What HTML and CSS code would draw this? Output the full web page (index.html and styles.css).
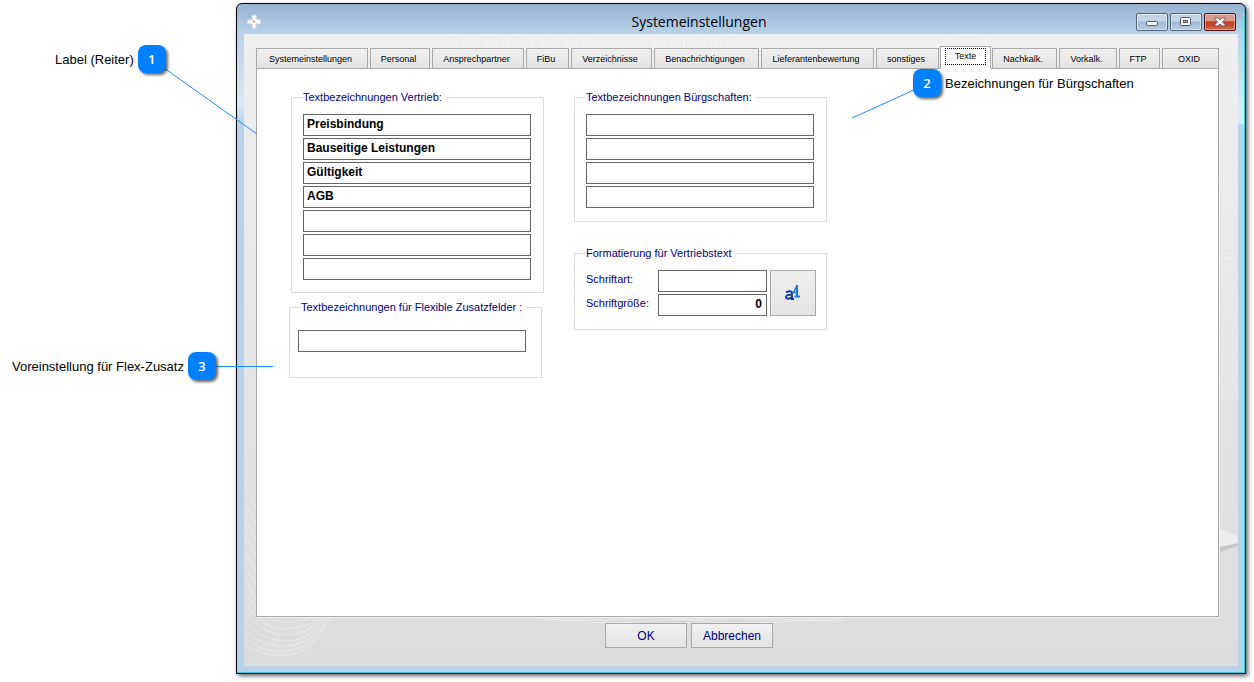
FILE: index.html
```html
<!DOCTYPE html>
<html lang="de">
<head>
<meta charset="utf-8">
<title>Systemeinstellungen</title>
<link rel="stylesheet" href="styles.css">
</head>
<body>
<main class="stage">
  <section class="window" aria-label="Systemeinstellungen">
    <header class="titlebar">
      <svg class="app-icon" width="16" height="16" viewBox="0 0 16 16" aria-hidden="true">
        <path d="M6 1.500L10 1L10 5L14.500 6L14 10L10 9.500L10 14.500L6 14L6.500 10L1.500 9.500L2 6L6.500 6Z" fill="#fff" stroke="#d5dde4" stroke-width="1"/>
        <circle cx="8" cy="7.500" r="1.200" fill="#ee9a6c"/>
      </svg>
      <h1 class="title">Systemeinstellungen</h1>
      <div class="controls">
        <button class="control" type="button" aria-label="Minimieren">
          <svg width="12" height="10" viewBox="0 0 12 10"><rect x=".5" y="4.500" width="11" height="4" rx="1" fill="#f4f4f4" stroke="#4f5966"/></svg>
        </button>
        <button class="control" type="button" aria-label="Maximieren">
          <svg width="12" height="10" viewBox="0 0 12 10"><rect x=".5" y=".5" width="10" height="8" rx="1" fill="#f4f4f4" stroke="#4f5966"/><rect x="3.500" y="3.500" width="4" height="2" fill="#9db5d0" stroke="#4f5966"/></svg>
        </button>
        <button class="control control-close" type="button" aria-label="Schließen">
          <svg width="12" height="10" viewBox="0 0 12 10"><path d="M1 1H4L6 3L8 1H11V2.500L8.500 5L11 7.500V9H8L6 7L4 9H1V7.500L3.500 5L1 2.500Z" fill="#fff" stroke="#5d3c42" stroke-width=".8"/></svg>
        </button>
      </div>
    </header>
    <div class="client">
      <svg class="swirl swirl-top" width="800" height="34" viewBox="0 0 800 34" aria-hidden="true">
        <path d="M210 0l9 34M220 0l9 34M230 0l9 34M240 0l9 34M250 0l9 34M262 0l8 34M274 0l7 34M286 0l6 34M298 0l4 34M310 0l3 34M322 0l1 34M334 0l-2 34M346 0l-4 34M400 0l5 34M410 0l4 34M420 0l3 34M430 0l2 34M440 0l1 34M450 0v34M462 0l-3 34M474 0l-6 34M486 0l-9 34M498 0l-14 34M700 0l14 34M710 0l12 34M720 0l10 34M730 0l8 34M740 0l8 34"/>
      </svg>
      <svg class="swirl swirl-bottom" width="600" height="200" viewBox="0 0 600 200" aria-hidden="true">
        <path d="M0 20L14 46M0 36L14 62M0 52L14 78M0 68L14 94M0 84L14 108M0 98L14 122M0 112L14 136M0 124Q20 160 50 156Q66 154 74 150M0 134Q20 168 50 162Q68 160 76 150M0 144Q22 174 52 168Q70 164 79 150M0 154Q24 180 52 174Q72 168 82 150M0 164Q24 186 50 179Q72 174 85 150M0 172Q24 191 48 184Q72 180 88 150M0 178Q28 196 56 186Q74 178 80 158"/>
        <path d="M276 151Q330 156 380 153T460 155T600 152M300 152Q350 160 410 155T600 155"/>
      </svg>
      <svg class="swirl swirl-right" width="18" height="560" viewBox="0 0 18 560" aria-hidden="true">
        <path class="faint" d="M0 108L18 118M0 122L18 132M0 138L18 148M0 152L18 162M0 166L18 176M0 178L18 186M0 190L18 198M0 200L18 204M0 206L18 208M0 212L18 214M0 218L18 220M0 224L18 226"/>
        <path d="M0 229L18 239M0 239L18 251M0 251L18 264M0 265L18 277M0 277L18 291M0 290L18 304M0 302L18 317M0 314L18 330M0 326L18 342M0 337L18 353M0 348L18 364"/>
        <path class="wedge-light" d="M0 495L18 502V510L0 513Z"/>
        <path class="wedge-dark" d="M0 513L18 509V512L0 518Z"/>
      </svg>
      <nav class="tabs" role="tablist" aria-label="Bereiche">
        <button class="tab" type="button" role="tab">Systemeinstellungen</button>
        <button class="tab" type="button" role="tab">Personal</button>
        <button class="tab" type="button" role="tab">Ansprechpartner</button>
        <button class="tab" type="button" role="tab">FiBu</button>
        <button class="tab" type="button" role="tab">Verzeichnisse</button>
        <button class="tab" type="button" role="tab">Benachrichtigungen</button>
        <button class="tab" type="button" role="tab">Lieferantenbewertung</button>
        <button class="tab" type="button" role="tab">sonstiges</button>
        <button class="tab tab-active" type="button" role="tab" aria-selected="true"><span class="focus">Texte</span></button>
        <button class="tab" type="button" role="tab">Nachkalk.</button>
        <button class="tab" type="button" role="tab">Vorkalk.</button>
        <button class="tab" type="button" role="tab">FTP</button>
        <button class="tab" type="button" role="tab">OXID</button>
      </nav>
      <form class="pane" id="settings">
        <div class="column column-left">
          <fieldset class="group group-sales">
            <legend>Textbezeichnungen Vertrieb:</legend>
            <input class="field" type="text" aria-label="Vertrieb 1" value="Preisbindung">
            <input class="field" type="text" aria-label="Vertrieb 2" value="Bauseitige Leistungen">
            <input class="field" type="text" aria-label="Vertrieb 3" value="Gültigkeit">
            <input class="field" type="text" aria-label="Vertrieb 4" value="AGB">
            <input class="field" type="text" aria-label="Vertrieb 5">
            <input class="field" type="text" aria-label="Vertrieb 6">
            <input class="field" type="text" aria-label="Vertrieb 7">
          </fieldset>
          <fieldset class="group group-flex">
            <legend>Textbezeichnungen für Flexible Zusatzfelder :</legend>
            <input class="field" type="text" aria-label="Zusatzfeld">
          </fieldset>
        </div>
        <div class="column column-right">
          <fieldset class="group">
            <legend>Textbezeichnungen Bürgschaften:</legend>
            <input class="field" type="text" aria-label="Bürgschaft 1">
            <input class="field" type="text" aria-label="Bürgschaft 2">
            <input class="field" type="text" aria-label="Bürgschaft 3">
            <input class="field" type="text" aria-label="Bürgschaft 4">
          </fieldset>
          <fieldset class="group">
            <legend>Formatierung für Vertriebstext</legend>
            <div class="format">
              <label class="format-label" for="font">Schriftart:</label>
              <input class="field" type="text" id="font">
              <label class="format-label" for="size">Schriftgröße:</label>
              <input class="field field-number" type="text" id="size" value="0">
              <button class="font-button" type="button" aria-label="Schrift wählen">
                <svg width="18" height="18" viewBox="0 0 18 18" fill="none" stroke-linecap="square">
                  <path d="M3 8Q7 6 8 9V15M8 11Q2 10 2 13.500Q3 16 8 13.500M8 15H9" stroke="#173c91" stroke-width="2"/>
                  <path d="M8 11L12.500 2.500M9 8.500H13" stroke="#2671c8" stroke-width="1.400"/>
                  <path d="M13 2V12.500M11.500 12.500H15" stroke="#1678d6" stroke-width="2"/>
                </svg>
              </button>
            </div>
          </fieldset>
        </div>
      </form>
      <footer class="actions">
        <button class="action" type="submit" form="settings">OK</button>
        <button class="action" type="button">Abbrechen</button>
      </footer>
    </div>
  </section>

  <svg class="leaders" width="1000" height="400" viewBox="0 0 1000 400" aria-hidden="true">
    <path d="M164 68L257 134M914 90L852 118M216 366.500H273"/>
  </svg>
  <div class="callout callout-1"><span>Label (Reiter)</span><b class="badge">1</b></div>
  <div class="callout callout-2"><b class="badge">2</b><span>Bezeichnungen für Bürgschaften</span></div>
  <div class="callout callout-3"><span>Voreinstellung für Flex-Zusatz</span><b class="badge">3</b></div>
</main>
</body>
</html>
```
FILE: styles.css
```css
* {
  box-sizing: border-box;
}

body {
  margin: 0;
  background: #fff;
  color: #000;
  font-family: "Liberation Sans", Arial, sans-serif;
}

button,
input {
  margin: 0;
  font-family: inherit;
}

.stage {
  position: relative;
  display: flex;
  min-height: 100vh;
  padding: 3px 8px 8px 236px;
}

/* Window frame */
.window {
  display: flex;
  flex: 1;
  flex-direction: column;
  padding: 1px 7px 7px;
  border: 1px solid #000;
  border-radius: 6px 6px 0 0;
  background:
    linear-gradient(transparent 30px, #dbe8f5 100px, transparent 120px) left / 7px 100% no-repeat,
    linear-gradient(transparent 30px, #dbe8f5 100px, #dbe8f5 120px, transparent 120px) right / 7px 100% no-repeat,
    linear-gradient(#98b3d0, #b9d1ea 30px);
  box-shadow: inset -1px -1px #2fd0ee, 2px 2px 4px rgba(0, 0, 0, 0.6);
}

.titlebar {
  display: grid;
  grid-template-columns: 1fr auto 1fr;
  align-items: center;
  height: 29px;
  padding: 0 2px;
}

.title {
  margin: 0;
  padding: 5px 84px 0 0;
  font: 14px/20px "Open Sans", "Noto Sans", sans-serif;
}

.app-icon {
  margin-top: 4px;
}

.controls {
  display: flex;
  justify-content: flex-end;
  gap: 2px;
  padding-top: 4px;
}

.control {
  display: grid;
  place-items: center;
  width: 32px;
  height: 18px;
  padding: 0;
  border: 1px solid #57677b;
  border-radius: 2px;
  background: linear-gradient(#c4d5e8 45%, #9fb8d3 50%, #b6cce4);
  box-shadow: inset 0 0 0 1px rgba(255, 255, 255, 0.4);
}

.control-close {
  border-color: #4c1219;
  background: linear-gradient(#dc9a8d 40%, #b93a22 50%, #cf6d4e);
}

/* Client area */
.client {
  position: relative;
  display: flex;
  flex: 1;
  flex-direction: column;
  padding: 12px 19px 18px 12px;
  background: linear-gradient(#efefef, #dcdcdc);
}

.swirl {
  position: absolute;
  fill: none;
  stroke: rgba(255, 255, 255, 0.35);
}

.swirl-top {
  top: 0;
  left: 0;
}

.swirl-bottom {
  bottom: 0;
  left: 0;
}

.swirl-right {
  top: 0;
  right: 0;
}

.faint {
  stroke-opacity: 0.5;
}

.wedge-light {
  fill: #ececec;
  stroke: none;
}

.wedge-dark {
  fill: #c8c8c8;
  stroke: none;
}

.tabs {
  position: relative;
  z-index: 1;
  display: grid;
  grid-template-columns: 112fr 60fr 92fr 43fr 81fr 105fr 113fr 63fr 49fr 65fr 58fr 41fr 57fr;
  gap: 2px;
  align-items: end;
  height: 23px;
}

.tab {
  min-width: 0;
  height: 21px;
  padding: 0 3px 0 0;
  border: 1px solid #a9a9a9;
  background: linear-gradient(#f0f0f0, #e3e3e3);
  font-size: 9px;
  line-height: 18px;
  white-space: nowrap;
}

.tab-active {
  height: 23px;
  margin: 0 -1px;
  padding: 1px 4px 3px;
  border-bottom-color: #fff;
  background: #fff;
}

.focus {
  display: block;
  border: 1px dotted #000;
  line-height: 15px;
}

.pane {
  position: relative;
  display: flex;
  flex: 1;
  gap: 30px;
  margin-top: -1px;
  padding: 21px 32px;
  border: 1px solid #a9a9a9;
  background: #fff;
  box-shadow: 1px 1px #f0f0f0;
}

.column {
  display: flex;
  flex-direction: column;
}

.column-left {
  gap: 7px;
  width: 255px;
}

.column-right {
  gap: 24px;
  width: 253px;
}

.group {
  display: flex;
  flex-direction: column;
  gap: 2px;
  min-width: 0;
  margin: 0;
  padding: 10px 12px 13px 11px;
  border: 1px solid #dcdcdc;
}

.group legend {
  padding: 0 4px 0 0;
  color: #000080;
  font-size: 11px;
  line-height: 14px;
  white-space: nowrap;
}

.group-sales {
  width: 253px;
  align-self: flex-end;
  padding-bottom: 12px;
}

.group-flex {
  width: 253px;
  padding: 16px 15px 25px 8px;
}

.group-flex legend {
  margin-left: 3px;
}

.field {
  width: 100%;
  max-width: 228px;
  height: 22px;
  padding: 0 3px 2px;
  border: 1px solid #646464;
  border-radius: 0;
  background: #fff;
  font-size: 12px;
  font-weight: bold;
}

.field-number {
  padding-right: 4px;
  text-align: right;
}

.format {
  display: grid;
  grid-template-columns: 69px 109px 46px;
  gap: 2px 3px;
}

.format-label {
  color: #000080;
  font-size: 11px;
  line-height: 19px;
}

.format {
  column-gap: 3px;
}

.font-button {
  display: grid;
  grid-area: 1 / 3 / 3 / 4;
  place-items: center;
  padding: 0;
  border: 1px solid #a9a9a9;
  background: linear-gradient(#f0f0f0, #e3e3e3);
}

.actions {
  position: relative;
  display: flex;
  justify-content: center;
  gap: 4px;
  padding: 6px 97px 0 0;
}

.action {
  width: 82px;
  height: 25px;
  padding: 0;
  border: 1px solid #a9a9a9;
  background: linear-gradient(#f0f0f0, #e3e3e3);
  color: #000080;
  font-size: 12px;
}

/* Annotations over the window */
.leaders {
  position: absolute;
  top: 0;
  left: 0;
  z-index: 2;
  fill: none;
  stroke: #1a8cff;
  pointer-events: none;
}

.callout {
  position: absolute;
  z-index: 3;
  display: flex;
  align-items: center;
  gap: 4px;
  font-size: 13px;
  white-space: nowrap;
}

.badge {
  display: grid;
  place-items: center;
  width: 28px;
  height: 28px;
  border-radius: 8px;
  background: #0080ff;
  box-shadow: 2px 2px 3px rgba(0, 0, 0, 0.6);
  color: #fff;
  font: 600 13px "Open Sans", sans-serif;
}

.callout-1 {
  top: 45px;
  left: 55px;
}

.callout-2 {
  top: 69px;
  left: 913px;
}

.callout-3 {
  top: 352px;
  left: 12px;
}
```
